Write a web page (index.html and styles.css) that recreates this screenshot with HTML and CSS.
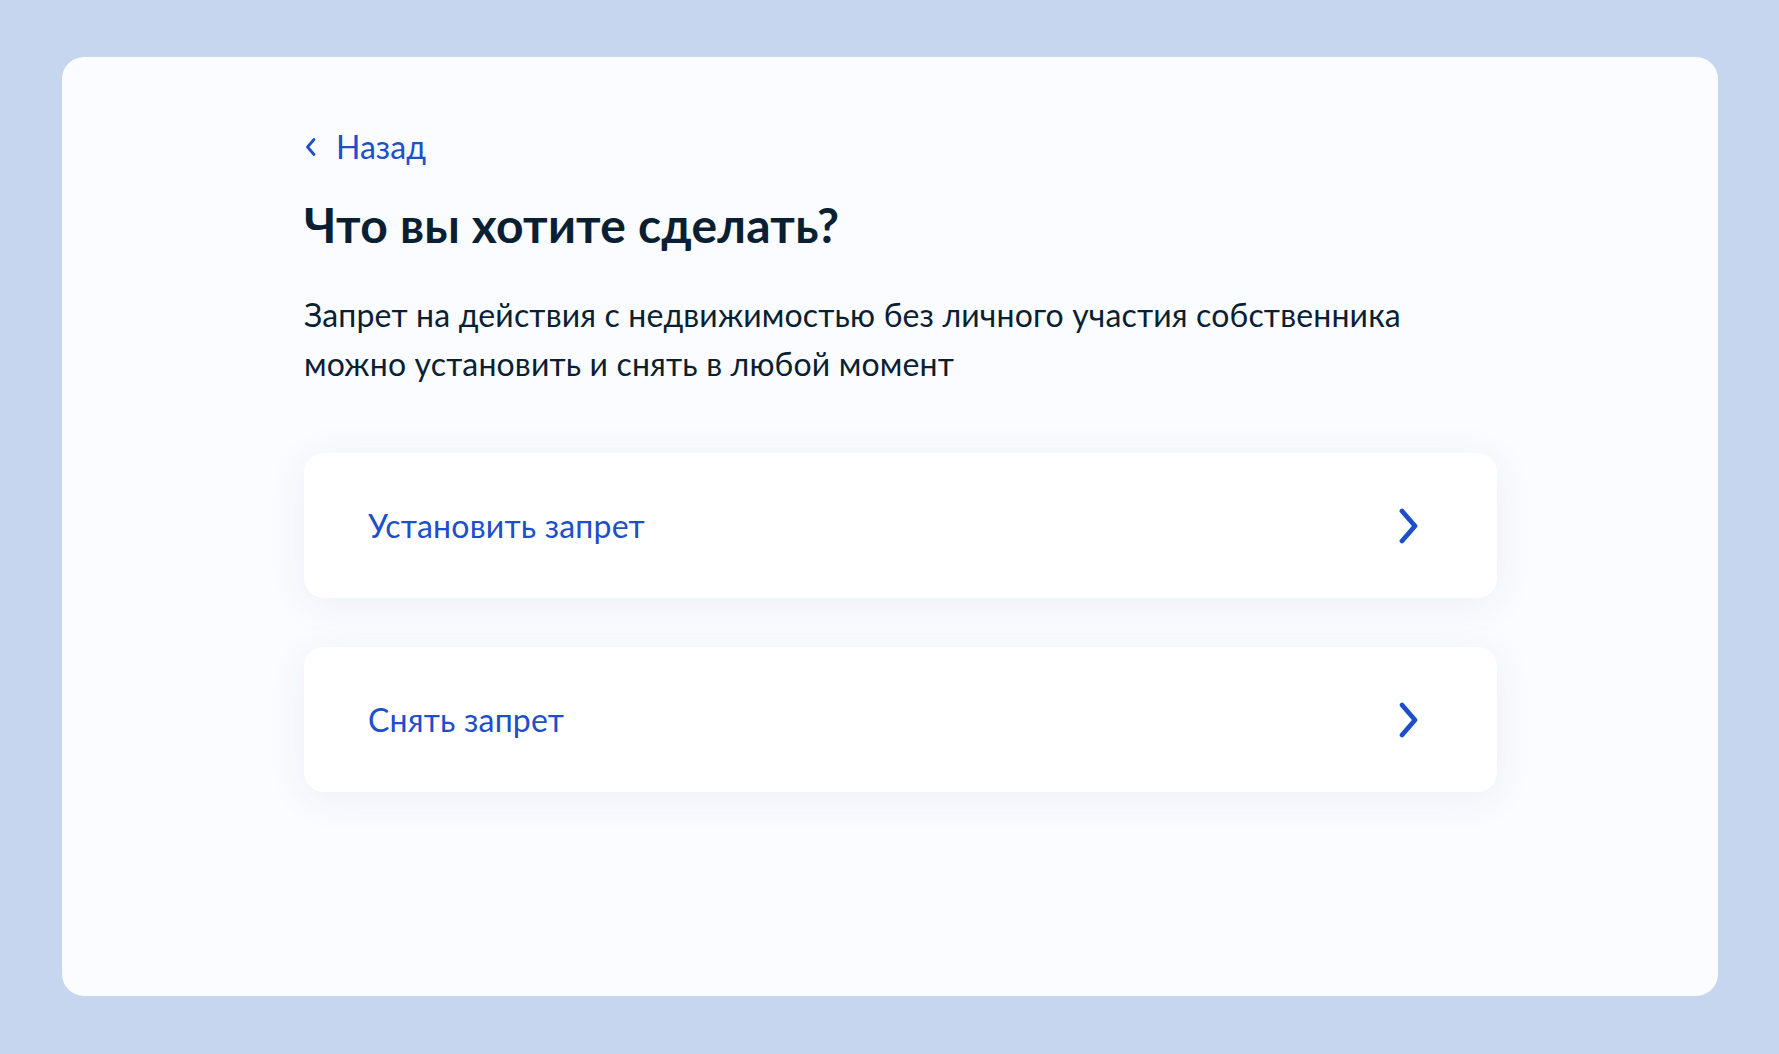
FILE: index.html
```html
<!DOCTYPE html>
<html lang="ru">

<head>
    <meta charset="UTF-8">
    <title>Запрет на действия с недвижимостью</title>
    <link rel="stylesheet" href="styles.css">
</head>

<body>
<div class="page">
    <div class="content">
        <a class="back" href="#">
            <svg class="back-icon" width="14" height="22" viewBox="0 0 14 22">
                <path d="M10 3.5 L3.5 11 L10 18.5" fill="none" stroke="currentColor" stroke-width="2.8" stroke-linecap="round" stroke-linejoin="round"/>
            </svg>
            <span>Назад</span>
        </a>
        <h1 class="title">Что вы хотите сделать?</h1>
        <p class="text">Запрет на действия с недвижимостью без личного участия собственника<br>можно установить и снять в любой момент</p>

        <div class="options">
            <a class="option" href="#">
                <span class="option-name">Установить запрет</span>
                <svg class="option-arrow" width="24" height="38" viewBox="0 0 24 38">
                    <path d="M5 4 L18 19 L5 34" fill="none" stroke="currentColor" stroke-width="4.8" stroke-linecap="round" stroke-linejoin="round"/>
                </svg>
            </a>
            <a class="option" href="#">
                <span class="option-name">Снять запрет</span>
                <svg class="option-arrow" width="24" height="38" viewBox="0 0 24 38">
                    <path d="M5 4 L18 19 L5 34" fill="none" stroke="currentColor" stroke-width="4.8" stroke-linecap="round" stroke-linejoin="round"/>
                </svg>
            </a>
        </div>
    </div>
</div>
</body>

</html>
```

FILE: styles.css
```css
body {
    margin: 0;
    background: #c6d6ee;
    font-family: "Lato", "Noto Sans", sans-serif;
    color: #0b1f33;
}

.page {
    margin: 57px 61px 0 62px;
    height: 939px;
    box-sizing: border-box;
    background: #fafcff;
    border-radius: 22px;
    padding: 72px 0 0 242px;
}

.content {
    width: 1193px;
}

.back {
    display: flex;
    align-items: center;
    gap: 18px;
    color: #1d4fc9;
    text-decoration: none;
    font-size: 32px;
    line-height: 36px;
}

.back-icon {
    display: block;
}

.title {
    margin: 32px 0 0;
    font-size: 48px;
    line-height: 56px;
    font-weight: 700;
    letter-spacing: 0.2px;
}

.text {
    margin: 37px 0 0;
    font-size: 32px;
    line-height: 49px;
    letter-spacing: 0.15px;
}

.options {
    display: flex;
    flex-direction: column;
    gap: 49px;
    margin-top: 65px;
}

.option {
    display: flex;
    align-items: center;
    justify-content: space-between;
    height: 145px;
    padding: 0 76px 0 64px;
    background: #fff;
    border-radius: 20px;
    box-shadow: 0 6px 40px rgba(40, 60, 110, 0.07);
    text-decoration: none;
    color: #1d4fc9;
}

.option-name {
    font-size: 32px;
    letter-spacing: 0.2px;
}

.option-arrow {
    display: block;
}
```
